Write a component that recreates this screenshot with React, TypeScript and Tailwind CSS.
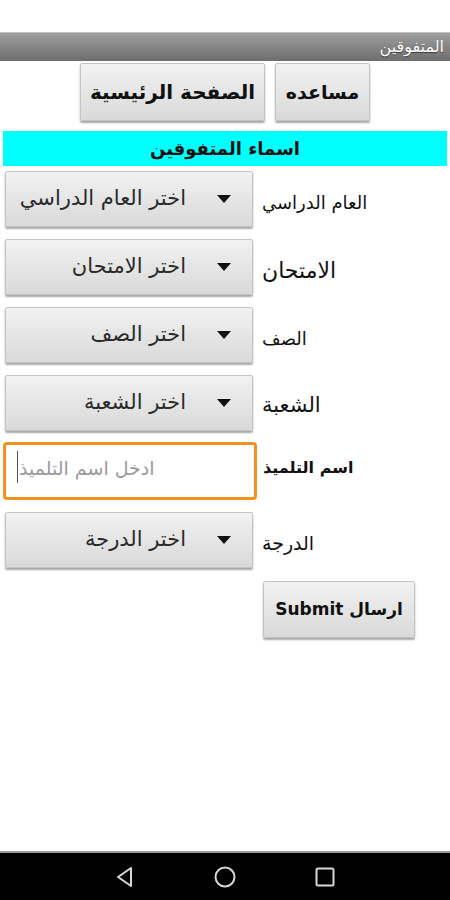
import React from "react";

const AR = { fontFamily: '"DejaVu Sans", "Noto Sans", sans-serif' };

function Arrow() {
  return (
    <svg width="14" height="8" viewBox="0 0 14 8" className="shrink-0">
      <polygon points="0,0 14,0 7,8" fill="#111" />
    </svg>
  );
}

function Spinner({ text }: { text: string }) {
  return (
    <div className="ml-[5px] w-[248px] h-[56px] shrink-0 rounded-[2px] border border-[#c4c4c4] bg-gradient-to-b from-[#f2f2f2] to-[#d9d9d9] shadow-[0_2px_2px_rgba(0,0,0,0.35)] flex items-center justify-end pr-[21px] gap-[31px]">
      <span dir="rtl" className="text-[21px] text-[#2a2a2a] whitespace-nowrap" style={AR}>{text}</span>
      <Arrow />
    </div>
  );
}

function Row({ label, text, size }: { label: string; text: string; size: string }) {
  return (
    <div className="flex items-center h-[56px]">
      <Spinner text={text} />
      <span dir="rtl" className={"ml-[9px] mt-[6px] text-[#111] whitespace-nowrap " + size} style={AR}>{label}</span>
    </div>
  );
}

export default function App() {
  return (
    <div className="w-[450px] h-[900px] bg-white flex flex-col overflow-hidden" style={AR}>
      <div className="h-[32px] bg-white shrink-0" />
      <div className="h-[29px] shrink-0 bg-gradient-to-b from-[#a0a0a0] via-[#858585] to-[#6e6e6e] border-t border-[#c4c4c4] flex items-center justify-end pr-[6px]">
        <span dir="rtl" className="text-[16px] text-white [text-shadow:0_1px_1px_rgba(0,0,0,0.5)]">المتفوقين</span>
      </div>
      <div className="flex justify-center gap-[10px] mt-[2px] shrink-0">
        <div className="w-[185px] h-[58px] rounded-[2px] border border-[#c4c4c4] bg-gradient-to-b from-[#f2f2f2] to-[#d9d9d9] shadow-[0_2px_2px_rgba(0,0,0,0.35)] flex items-center justify-center">
          <span dir="rtl" className="text-[20px] font-bold text-[#111]">الصفحة الرئيسية</span>
        </div>
        <div className="w-[95px] h-[58px] rounded-[2px] border border-[#c4c4c4] bg-gradient-to-b from-[#f2f2f2] to-[#d9d9d9] shadow-[0_2px_2px_rgba(0,0,0,0.35)] flex items-center justify-center">
          <span dir="rtl" className="text-[19px] font-bold text-[#111]">مساعده</span>
        </div>
      </div>
      <div className="mt-[10px] mx-[3px] h-[35px] bg-[#00ffff] flex items-center justify-center shrink-0">
        <span dir="rtl" className="text-[18px] font-bold text-[#111]">اسماء المتفوقين</span>
      </div>
      <div className="mt-[5px] flex flex-col gap-[12px] shrink-0">
        <Row label="العام الدراسي" text="اختر العام الدراسي" size="text-[18px]" />
        <Row label="الامتحان" text="اختر الامتحان" size="text-[22px]" />
        <Row label="الصف" text="اختر الصف" size="text-[18px]" />
        <Row label="الشعبة" text="اختر الشعبة" size="text-[21px]" />
        <div className="flex items-center h-[58px] -mt-[1px]">
          <div className="ml-[3px] w-[254px] h-[58px] shrink-0 rounded-[4px] border-[3px] border-[#f4901e] bg-white flex items-start pt-[5px] pl-[11px]">
            <div className="w-[1px] h-[32px] bg-[#555] mt-[1px]" />
            <span dir="rtl" className="ml-[1px] text-[19px] text-[#9a9a9a] mt-[4px] whitespace-nowrap">ادخل اسم التلميذ</span>
          </div>
          <span dir="rtl" className="ml-[6px] -mt-[6px] text-[16px] font-bold text-[#111] whitespace-nowrap">اسم التلميذ</span>
        </div>
        <Row label="الدرجة" text="اختر الدرجة" size="text-[19px]" />
      </div>
      <div className="mt-[13px] ml-[263px] w-[152px] h-[57px] shrink-0 rounded-[2px] border border-[#c4c4c4] bg-gradient-to-b from-[#f2f2f2] to-[#d9d9d9] shadow-[0_2px_2px_rgba(0,0,0,0.35)] flex items-center justify-center">
        <span dir="rtl" className="text-[17px] font-bold text-[#111]">ارسال Submit</span>
      </div>
      <div className="flex-1" />
      <div className="h-[49px] shrink-0 bg-black border-t-[2px] border-[#9a9a9a] flex items-center justify-center">
        <div className="flex items-center gap-[78px] -ml-[1px]">
          <svg width="22" height="22" viewBox="0 0 22 22">
            <polygon points="17,2 17,20 4,11" fill="none" stroke="#d8d8d8" strokeWidth="2" strokeLinejoin="round" />
          </svg>
          <svg width="22" height="22" viewBox="0 0 22 22">
            <circle cx="11" cy="11" r="9.5" fill="none" stroke="#d8d8d8" strokeWidth="2" />
          </svg>
          <svg width="22" height="22" viewBox="0 0 22 22">
            <rect x="2.5" y="2.5" width="17" height="17" rx="1.5" fill="none" stroke="#d8d8d8" strokeWidth="2" />
          </svg>
        </div>
      </div>
    </div>
  );
}
